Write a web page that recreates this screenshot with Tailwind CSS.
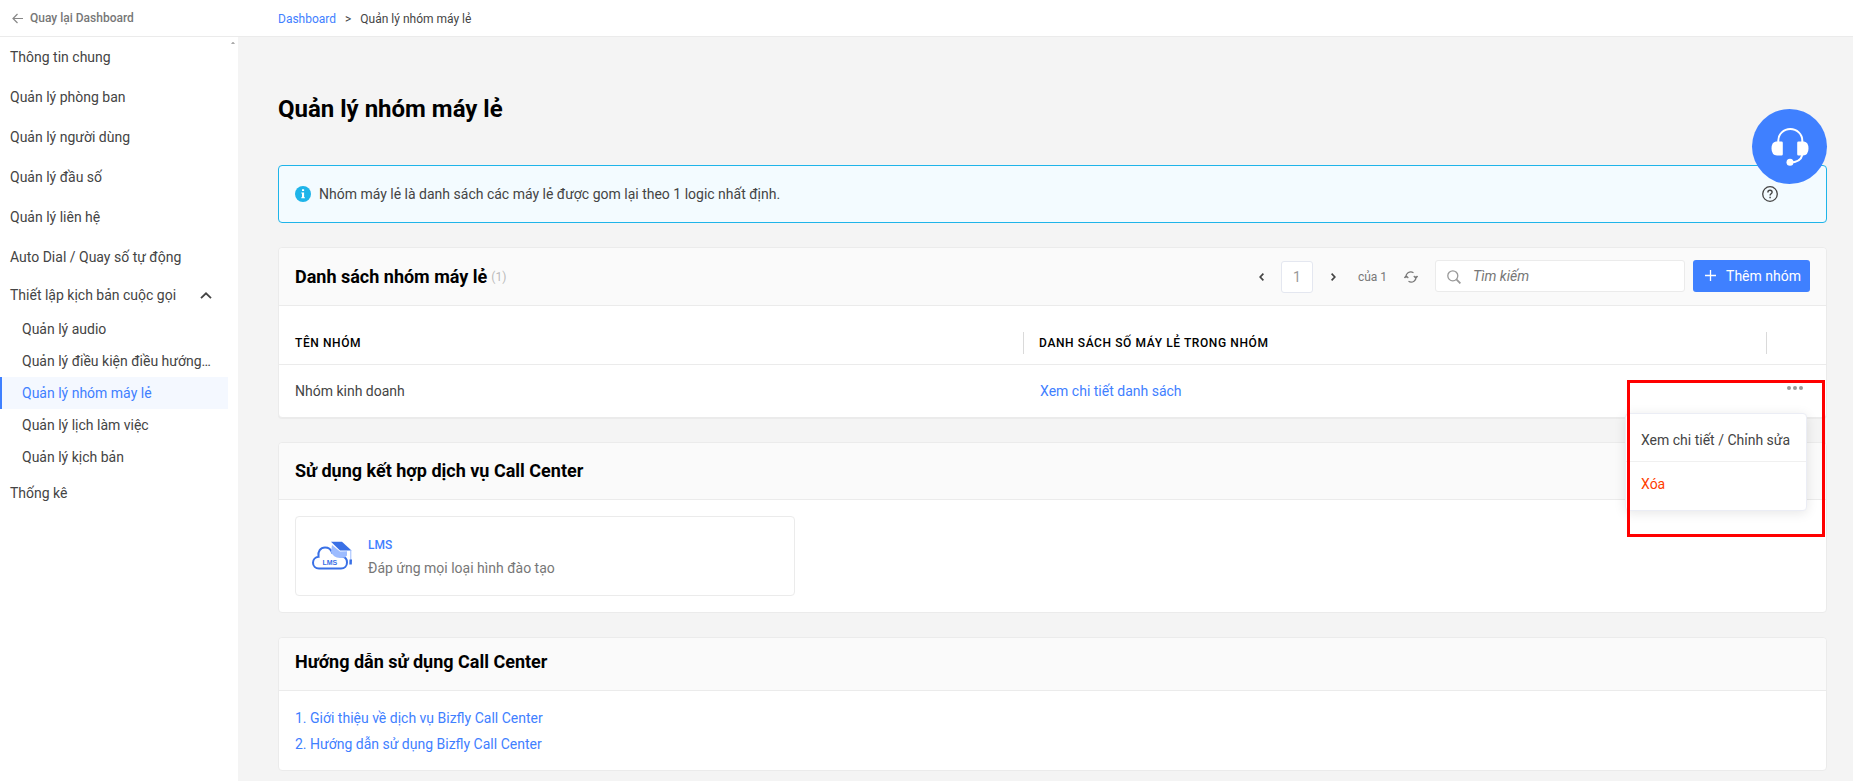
<!DOCTYPE html>
<html lang="vi">
<head>
<meta charset="utf-8">
<title>Quản lý nhóm máy lẻ</title>
<script src="https://cdn.jsdelivr.net/npm/@tailwindcss/browser@4"></script>
</head>
<body class="flex min-h-screen flex-col bg-[#f4f4f4] font-['Roboto',sans-serif] text-sm text-[#444]">
<header class="flex h-[37px] border-b border-[#ebebeb] bg-white text-xs">
  <a href="#" class="flex w-[238px] shrink-0 items-center gap-[7px] pl-3 font-medium text-[#777]">
    <svg class="size-[11px]" viewBox="0 0 11 11" fill="none" stroke="#888" stroke-width="1.2"><path d="M11 5.500H1M5.500 1 1 5.500l4.500 4.500"/></svg>
    Quay lại Dashboard
  </a>
  <nav aria-label="Breadcrumb" class="flex items-center gap-[9px] pl-10 pt-px">
    <a href="#" class="text-[#3f80ff]">Dashboard</a><span>&gt;</span><span>Quản lý nhóm máy lẻ</span>
  </nav>
</header>
<div class="flex flex-1">
  <aside class="flex w-[238px] shrink-0 items-start bg-white">
    <nav aria-label="Menu" class="flex min-w-0 flex-1 flex-col">
      <a href="#" class="flex h-10 items-center pl-[10px]">Thông tin chung</a>
      <a href="#" class="flex h-10 items-center pl-[10px]">Quản lý phòng ban</a>
      <a href="#" class="flex h-10 items-center pl-[10px]">Quản lý người dùng</a>
      <a href="#" class="flex h-10 items-center pl-[10px]">Quản lý đầu số</a>
      <a href="#" class="flex h-10 items-center pl-[10px]">Quản lý liên hệ</a>
      <a href="#" class="flex h-10 items-center pl-[10px]">Auto Dial / Quay số tự động</a>
      <button class="flex h-9 items-center justify-between pl-[10px] pr-4">Thiết lập kịch bản cuộc gọi
        <svg class="h-[7px] w-3" viewBox="0 0 12 7" fill="none" stroke="#444" stroke-width="1.800"><path d="M1 6.200 6 1.300l5 4.900"/></svg>
      </button>
      <a href="#" class="flex h-8 items-center pl-[22px]">Quản lý audio</a>
      <a href="#" class="flex h-8 items-center whitespace-nowrap pl-[22px]">Quản lý điều kiện điều hướng…</a>
      <a href="#" aria-current="page" class="flex h-8 items-center border-l-2 border-[#3f80ff] bg-[#f4f8ff] pl-5 text-[#3f80ff]">Quản lý nhóm máy lẻ</a>
      <a href="#" class="flex h-8 items-center pl-[22px]">Quản lý lịch làm việc</a>
      <a href="#" class="flex h-8 items-center pl-[22px]">Quản lý kịch bản</a>
      <a href="#" class="flex h-10 items-center pl-[10px]">Thống kê</a>
    </nav>
    <div class="flex w-[10px] justify-center pt-[5px]"><svg class="h-[2px] w-1" viewBox="0 0 4 2" fill="#aaa"><path d="M0 2 1.500 0h1L4 2z"/></svg></div>
  </aside>
  <main class="flex min-w-0 flex-1 flex-col pb-[10px] pl-10 pr-[26px] pt-14">
    <h1 class="mb-10 text-2xl font-bold leading-8 text-black">Quản lý nhóm máy lẻ</h1>
    <div class="relative mb-6 flex h-[58px] items-center rounded-[4px] border border-[#1eb4e9] bg-[#f3fbff] pl-4 pr-12">
      <svg class="mr-2 size-4" viewBox="0 0 16 16"><circle cx="8" cy="8" r="8" fill="#1eb4e9"/><path d="M7 3.200h2.100v1.900H7zM6.300 6.500h2.800v4.800h.8v1H6.200v-1H7V7.500h-.7z" fill="#fff"/></svg>
      <span class="flex-1">Nhóm máy lẻ là danh sách các máy lẻ được gom lại theo 1 logic nhất định.</span>
      <button aria-label="Trợ giúp"><svg class="size-4" viewBox="0 0 16 16" fill="none" stroke="#444"><circle cx="8" cy="8" r="7.300" stroke-width="1.300"/><path d="M5.900 6.400c0-1.300.9-2.100 2.100-2.100s2.100.8 2.100 1.900c0 1.500-2 1.600-2 3.200" stroke-width="1.400"/><path d="M8.100 10.800v1.500" stroke-width="1.500"/></svg></button>
      <button aria-label="Hỗ trợ" class="absolute -right-px -top-[57px] z-10 flex size-[75px] items-center justify-center rounded-full bg-[#3f80ff]">
        <svg class="size-[38px]" viewBox="0 0 38 38" fill="none"><path d="M7.300 14V12.500a12 11.500 0 0 1 24 0V14" stroke="#fff" stroke-width="2"/><path d="M5 13.500h5.500q1.300 0 1.300 1.300v11.500q0 1.300-1.300 1.300H6q-5.500-.5-5.500-7t4.500-7.100zM33 13.500h-5.500q-1.300 0-1.300 1.300v11.500q0 1.300 1.300 1.300H32q5.500-.5 5.500-7t-4.500-7.100z" fill="#fff"/><path d="M31.300 27c-1 4-5 7.500-12.300 7.500" stroke="#fff" stroke-width="2"/><circle cx="19" cy="34.300" r="3.500" fill="#fff"/></svg>
      </button>
    </div>

    <section class="relative mb-6 rounded-[4px] border border-[#ebebeb] bg-white shadow-[0_1px_0_#ebebeb]">
      <div class="flex h-[58px] items-center rounded-t-[4px] border-b border-[#ebebeb] bg-[#fafafa] px-4">
        <h2 class="text-lg font-bold text-black">Danh sách nhóm máy lẻ</h2><span class="ml-1 text-xs text-[#bbb]">(1)</span>
        <div class="ml-auto flex items-center text-xs text-[#777]">
          <button aria-label="Trang trước" class="mr-[17px]"><svg class="h-2 w-[5px]" viewBox="0 0 5 8" fill="none" stroke="#444" stroke-width="1.700"><path d="M4.400.6 1.200 4l3.200 3.400"/></svg></button>
          <input aria-label="Trang" value="1" class="h-8 w-8 rounded-[3px] border border-[#e4e7f0] bg-white text-center text-sm text-[#999]">
          <button aria-label="Trang sau" class="ml-[18px] mr-[22px]"><svg class="h-2 w-[5px]" viewBox="0 0 5 8" fill="none" stroke="#444" stroke-width="1.700"><path d="M.6.6 3.800 4 .6 7.400"/></svg></button>
          <span>của 1</span>
          <button aria-label="Tải lại" class="ml-[17px] mr-[17px]"><svg class="h-3 w-[14px]" viewBox="0 0 14 12" fill="none" stroke="#777" stroke-width="1.200"><path d="M2.100 7A4.900 4.900 0 0 1 9.500 1.700M11.900 5a4.900 4.900 0 0 1-7.400 5.300M.300 7 2.100 4.700 4.300 7M9.800 5l2.100 2.300L13.700 5"/></svg></button>
          <div class="relative mb-[2px]">
            <svg class="absolute left-3 top-[10px] size-[14px]" viewBox="0 0 14 14" fill="none" stroke="#999" stroke-width="1.300"><circle cx="5.800" cy="5.800" r="5"/><path d="m9.400 9.400 4 4" stroke-width="1.800"/></svg>
            <input aria-label="Tìm kiếm" placeholder="Tìm kiếm" class="block h-8 w-[250px] rounded-[3px] border border-[#ebebeb] bg-white pl-[37px] text-sm italic placeholder:text-[#777]">
          </div>
          <button class="mb-[2px] ml-2 flex h-8 items-center gap-[10px] rounded-[3px] bg-[#3f80ff] pl-3 pr-[9px] text-sm text-white"><svg class="size-[11px]" viewBox="0 0 11 11" stroke="#fff" stroke-width="1.300"><path d="M5.500 0v11M0 5.500h11"/></svg>Thêm nhóm</button>
        </div>
      </div>
      <table class="w-full table-fixed text-left">
        <colgroup><col class="w-[48.1%]"><col><col class="w-[60px]"></colgroup>
        <thead><tr class="border-b border-[#ebebeb] text-xs font-medium uppercase tracking-wider text-black">
          <th class="h-[58px] pl-4 pt-[26px] pb-[9px] font-medium"><div class="flex h-[22px] items-center">Tên nhóm</div></th>
          <th class="h-[58px] pt-[26px] pb-[9px] font-medium"><div class="flex h-[22px] items-center border-l border-[#dadada] pl-[15px]">Danh sách số máy lẻ trong nhóm</div></th>
          <th class="h-[58px] pt-[26px] pb-[9px]"><div class="h-[22px] border-l border-[#dadada]"></div></th>
        </tr></thead>
        <tbody><tr>
          <td class="h-[53px] pl-4">Nhóm kinh doanh</td>
          <td class="h-[53px] pl-[17px]"><a href="#" class="text-[#3f80ff]">Xem chi tiết danh sách</a></td>
          <td class="h-[53px] pb-[6px] pl-[21px]"><button aria-label="Thao tác" class="block"><svg class="h-1 w-4" viewBox="0 0 16 4" fill="#999"><circle cx="2" cy="2" r="2"/><circle cx="8" cy="2" r="2"/><circle cx="14" cy="2" r="2"/></svg></button></td>
        </tr></tbody>
      </table>
      <div role="menu" class="absolute right-[19px] top-[165px] z-10 flex h-[98px] w-[182px] flex-col rounded-[4px] border border-[#ebedf5] bg-white shadow-[0_2px_12px_rgba(0,0,0,0.1)]">
        <button role="menuitem" class="h-12 whitespace-nowrap border-b border-[#f0f0f0] pl-[15px] pt-1 text-left">Xem chi tiết / Chỉnh sửa</button>
        <button role="menuitem" class="flex-1 pb-1 pl-[15px] text-left text-[#ff3d00]">Xóa</button>
      </div>
      <div class="pointer-events-none absolute right-px top-[132px] z-20 h-[157px] w-[198px] border-3 border-[#ff0000]"></div>
    </section>

    <section class="mb-6 rounded-[4px] border border-[#ebebeb] bg-white">
      <h2 class="flex h-[57px] items-center rounded-t-[4px] border-b border-[#ebebeb] bg-[#fafafa] px-4 text-lg font-bold text-black">Sử dụng kết hợp dịch vụ Call Center</h2>
      <div class="p-4">
        <a href="#" class="flex h-20 w-[500px] items-center rounded-[4px] border border-[#ebebeb] pl-4">
          <svg class="mr-4 h-[30px] w-10" viewBox="0 0 40 30" fill="none"><path d="M9 27.500H7C3.500 27.500 1 25 1 21.700c0-3.300 2.400-5.600 5.500-5.900C5.500 10.500 8.500 6.500 13 6.500c3.300 0 6 1.800 7 5 4-1.500 8 0 10 4 3.500.5 5 3 5 6 0 3.500-2.500 6-6 6z" stroke="#3970e6" stroke-width="2"/><path d="M20 4l8 6.500 7-.2v4.200q-2 3-7 2.500-7-.5-9-6z" fill="#9dbcff"/><path d="M19 .8h11l9.500 8.700H28z" fill="#3970e6"/><path d="M38.800 9v10" stroke="#9dbcff"/><path d="M37.500 18.500h2.500l-.2 5h-2.500z" fill="#3970e6"/><text x="10.500" y="24" font-family="Liberation Sans,sans-serif" font-size="7" font-weight="700" fill="#3970e6">LMS</text></svg>
          <span class="flex flex-col"><span class="text-xs font-medium leading-6 text-[#3f80ff]">LMS</span><span class="leading-[22px] text-[#777]">Đáp ứng mọi loại hình đào tạo</span></span>
        </a>
      </div>
    </section>

    <section class="rounded-[4px] border border-[#ebebeb] bg-white">
      <h2 class="flex h-[53px] items-center rounded-t-[4px] border-b border-[#ebebeb] bg-[#fafafa] px-4 pb-1 text-lg font-bold text-black">Hướng dẫn sử dụng Call Center</h2>
      <div class="flex flex-col items-start px-4 pb-[13px] pt-[14px] leading-[26px] text-[#3f80ff]">
        <a href="#">1. Giới thiệu về dịch vụ Bizfly Call Center</a>
        <a href="#">2. Hướng dẫn sử dụng Bizfly Call Center</a>
      </div>
    </section>
  </main>
</div>
</body>
</html>
